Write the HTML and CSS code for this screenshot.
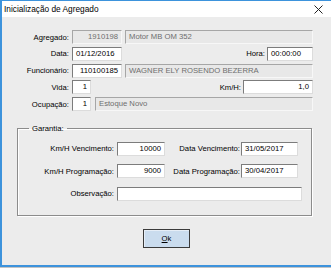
FILE: index.html
```html
<!DOCTYPE html>
<html lang="pt">
<head>
    <meta charset="UTF-8">
    <title>Inicialização de Agregado</title>
    <link rel="stylesheet" href="styles.css">
</head>
<body>
<div class="window">
    <div class="titlebar">
        <span class="title">Inicialização de Agregado</span>
        <svg class="close" width="9" height="9" viewBox="0 0 9 9">
            <path d="M0.5 0.5 L8.5 8.5 M8.5 0.5 L0.5 8.5" stroke="#222" stroke-width="1" fill="none"/>
        </svg>
    </div>

    <div class="content">
        <div class="row">
            <span class="lbl">Agregado:</span>
            <div class="box dis num w50">1910198</div>
            <div class="box dis grow">Motor MB OM 352</div>
        </div>
        <div class="row">
            <span class="lbl">Data:</span>
            <div class="box w50">01/12/2016</div>
            <span class="spacer"></span>
            <span class="lbl-inline">Hora:</span>
            <div class="box w46">00:00:00</div>
        </div>
        <div class="row">
            <span class="lbl">Funcionário:</span>
            <div class="box num w50">110100185</div>
            <div class="box dis grow">WAGNER ELY ROSENDO BEZERRA</div>
        </div>
        <div class="row">
            <span class="lbl">Vida:</span>
            <div class="box num w19">1</div>
            <span class="spacer"></span>
            <span class="lbl-inline">Km/H:</span>
            <div class="box num w70">1,0</div>
        </div>
        <div class="row">
            <span class="lbl">Ocupação:</span>
            <div class="box num w19">1</div>
            <div class="box dis grow gap4">Estoque Novo</div>
        </div>

        <fieldset class="group">
            <legend>Garantia:</legend>
            <div class="grow-row">
                <span class="glbl">Km/H Vencimento:</span>
                <div class="box num w48">10000</div>
                <span class="glbl2">Data Vencimento:</span>
                <div class="box w57">31/05/2017</div>
            </div>
            <div class="grow-row">
                <span class="glbl">Km/H Programação:</span>
                <div class="box num w48">9000</div>
                <span class="glbl2">Data Programação:</span>
                <div class="box w57">30/04/2017</div>
            </div>
            <div class="grow-row">
                <span class="glbl">Observação:</span>
                <div class="box w185"></div>
            </div>
        </fieldset>

        <div class="actions">
            <button class="btn" type="button"><u>O</u>k</button>
        </div>
    </div>
</div>
<div class="desktop"></div>
</body>
</html>
```

FILE: styles.css
```css
body {
    margin: 0;
    padding: 0;
    font-family: "Liberation Sans", Arial, sans-serif;
    background: #c4c4c4;
    width: 331px;
    height: 268px;
    overflow: hidden;
}
.window {
    width: 329px;
    height: 264px;
    border-left: 2px solid #3d93dc;
    border-top: 1px solid #3d93dc;
    border-bottom: 2px solid #3d93dc;
    background: #ececec;
}
.titlebar {
    height: 16px;
    background: #fff;
    display: flex;
    align-items: center;
    justify-content: space-between;
    padding: 0 8px 0 2px;
}
.title {
    font-size: 8.3px;
    color: #000;
}
.close {
    display: block;
}
.content {
    padding: 13px 18px 0 0;
    display: flex;
    flex-direction: column;
}
.row {
    display: flex;
    align-items: center;
    height: 14px;
    margin-bottom: 2.75px;
}
.lbl {
    width: 67px;
    text-align: right;
    margin-right: 3px;
    font-size: 7.7px;
    color: #000;
    flex-shrink: 0;
}
.lbl-inline {
    font-size: 7.7px;
    margin-right: 2px;
}
.spacer {
    flex: 1;
}
.box {
    box-sizing: border-box;
    height: 14px;
    background: #fff;
    border-top: 1px solid #7c7c7c;
    border-left: 1px solid #7c7c7c;
    border-right: 1px solid #dcdcdc;
    border-bottom: 1px solid #dcdcdc;
    font-size: 7.7px;
    line-height: 12px;
    padding: 0 3px;
    color: #000;
    white-space: nowrap;
    overflow: hidden;
    flex-shrink: 0;
}
.box.dis {
    background: #e8e8e8;
    border-top-color: #a6a6a6;
    border-left-color: #a6a6a6;
    border-right-color: #f7f7f7;
    border-bottom-color: #f7f7f7;
    color: #6e6e6e;
}
.box.num {
    text-align: right;
}
.box.grow {
    flex: 1;
    margin-left: 3px;
}
.box.gap4 {
    margin-left: 4px;
}
.w19 { width: 19px; }
.w46 { width: 46px; }
.w48 { width: 48px; }
.w50 { width: 50px; }
.w57 { width: 57px; }
.w70 { width: 70px; }
.w185 { width: 185px; }

.group {
    margin: 10px 0 0 15px;
    padding: 9px 0 14px 0;
    border: 1px solid #8c8c8c;
    box-shadow: inset 1px 1px 0 #fff, 1px 1px 0 #fff;
    width: 295px;
    box-sizing: border-box;
}
.group legend {
    font-size: 7.7px;
    line-height: 9px;
    padding: 0 3px;
    margin-left: 11px;
}
.grow-row {
    display: flex;
    align-items: center;
    height: 14px;
    margin-bottom: 8.5px;
}
.grow-row:last-child {
    margin-bottom: 0;
}
.glbl {
    width: 96px;
    text-align: right;
    margin-right: 3px;
    font-size: 7.7px;
    flex-shrink: 0;
}
.glbl2 {
    width: 75px;
    text-align: right;
    margin-right: 1px;
    font-size: 7.7px;
    flex-shrink: 0;
}
.actions {
    display: flex;
    justify-content: center;
    padding-left: 18px;
    margin-top: 13px;
}
.btn {
    width: 47px;
    height: 19px;
    background: #cadcee;
    border: 1px solid #3a3a3a;
    box-shadow: inset 1px 1px 0 #e6eef7;
    font-family: "Liberation Sans", Arial, sans-serif;
    font-size: 7.7px;
    color: #000;
    padding: 0;
}
.desktop {
    height: 2px;
    background: #c4c4c4;
}
```
